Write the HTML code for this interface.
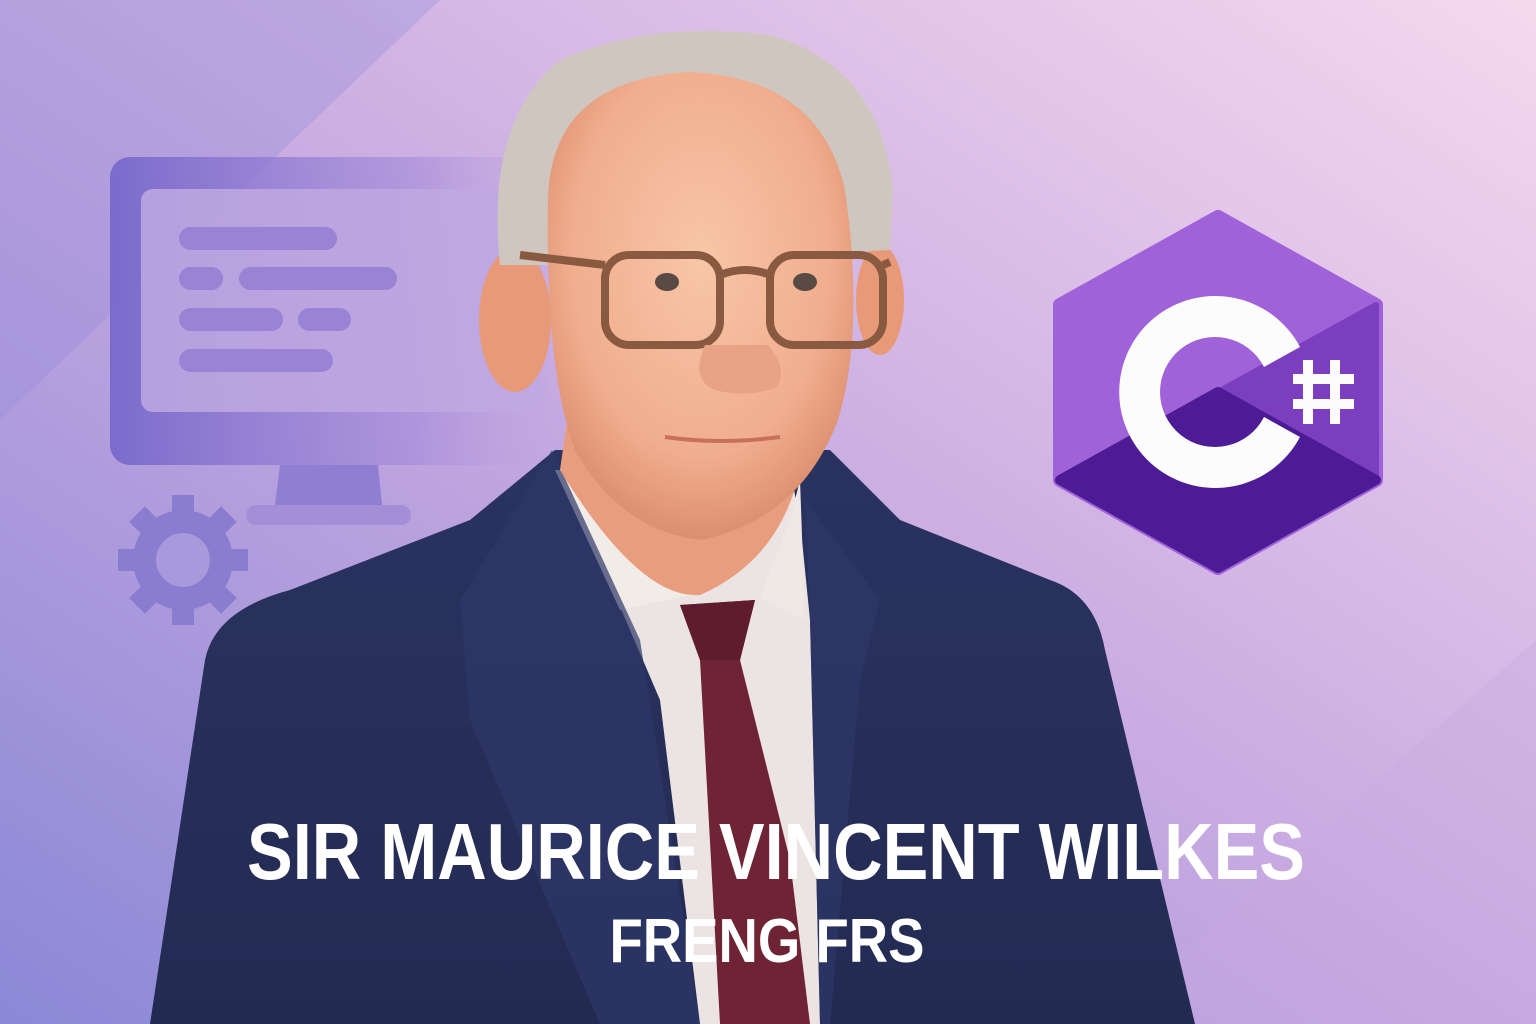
<!DOCTYPE html>
<html><head><meta charset="utf-8"><style>
html,body{margin:0;padding:0;width:1536px;height:1024px;overflow:hidden}
svg{display:block}
</style></head><body>
<svg width="1536" height="1024" viewBox="0 0 1536 1024" xmlns="http://www.w3.org/2000/svg">
<defs>
<linearGradient id="bg" x1="0" y1="1" x2="1" y2="0">
<stop offset="0" stop-color="#8a88d6"/>
<stop offset="0.45" stop-color="#c2a6e0"/>
<stop offset="1" stop-color="#f6d8ee"/>
</linearGradient>
<linearGradient id="mon" x1="0" y1="0" x2="1" y2="0">
<stop offset="0" stop-color="#7a6ccc"/>
<stop offset="0.7" stop-color="#a48ad8" stop-opacity="0.6"/>
<stop offset="1" stop-color="#c0a8e0" stop-opacity="0.2"/>
</linearGradient>
<linearGradient id="suit" x1="0" y1="0" x2="0" y2="1">
<stop offset="0" stop-color="#2a3360"/>
<stop offset="1" stop-color="#232a52"/>
</linearGradient>
<radialGradient id="face" cx="0.5" cy="0.4" r="0.6">
<stop offset="0" stop-color="#f8c6a8"/>
<stop offset="0.7" stop-color="#f0ae8e"/>
<stop offset="1" stop-color="#dc8e70"/>
</radialGradient>
</defs>
<rect width="1536" height="1024" fill="url(#bg)"/>
<polygon points="0,0 440,0 0,420" fill="#9088d6" opacity="0.3"/>
<polygon points="1100,1024 1536,640 1536,1024" fill="#c9a8df" opacity="0.35"/>

<!-- monitor -->
<rect x="110" y="157" width="440" height="308" rx="20" fill="url(#mon)"/>
<rect x="141" y="189" width="400" height="223" rx="12" fill="#bfa8e2" opacity="0.85"/>
<g fill="#9a82d4">
<rect x="179" y="227" width="158" height="23" rx="11.5"/>
<rect x="179" y="267" width="44" height="23" rx="11.5"/>
<rect x="239" y="267" width="158" height="23" rx="11.5"/>
<rect x="179" y="308" width="104" height="23" rx="11.5"/>
<rect x="298" y="308" width="53" height="23" rx="11.5"/>
<rect x="179" y="349" width="154" height="23" rx="11.5"/>
</g>
<polygon points="280,465 378,465 382,505 275,505" fill="#8f7ed2"/>
<rect x="246" y="505" width="165" height="20" rx="10" fill="#a48ed8"/>
<!-- gear -->
<g transform="translate(183,560)" fill="#8a7ccf">
<circle r="50"/>
<g id="t"><rect x="-11" y="-65" width="22" height="24"/></g>
<use href="#t" transform="rotate(45)"/><use href="#t" transform="rotate(90)"/><use href="#t" transform="rotate(135)"/>
<use href="#t" transform="rotate(180)"/><use href="#t" transform="rotate(225)"/><use href="#t" transform="rotate(270)"/><use href="#t" transform="rotate(315)"/>
<circle r="27" fill="#a898dc"/>
</g>

<!-- C# logo -->
<g>
<polygon points="1218,217 1376,305 1376,480 1218,568 1060,480 1060,305" fill="#a062d8" stroke="#a062d8" stroke-width="14" stroke-linejoin="round"/>
<polygon points="1218,392 1376,305 1376,480" fill="#7b3ebf" stroke="#7b3ebf" stroke-width="6" stroke-linejoin="round"/>
<polygon points="1218,392 1376,480 1218,568 1060,480" fill="#4c1b95" stroke="#4c1b95" stroke-width="10" stroke-linejoin="round"/>
<path d="M1300,347 A96,96 0 1 0 1300,437 L1264,417 A55,55 0 1 1 1264,367 Z" fill="#fdfcfc"/>
<g fill="#fdfcfc">
<rect x="1303" y="360" width="10" height="64"/>
<rect x="1330" y="360" width="10" height="64"/>
<rect x="1293" y="374" width="61" height="10"/>
<rect x="1293" y="399" width="61" height="10"/>
</g>
</g>

<!-- person -->
<path d="M150,1024 L205,660 Q215,610 290,590 L470,520 L555,450 L830,450 L900,520 L1050,580 Q1095,595 1105,650 L1195,1024 Z" fill="url(#suit)"/>
<path d="M555,470 L600,560 L660,700 L700,1024 L820,1024 L810,620 L800,520 L790,470 Z" fill="#ece4e2"/>
<path d="M555,470 L620,610 L690,595 L640,520 Z" fill="#f2ece8"/>
<path d="M800,480 L805,620 L760,598 L790,520 Z" fill="#f0e8e4"/>
<path d="M680,605 L755,600 L740,660 L790,860 L810,1024 L720,1024 L700,660 Z" fill="#6e2434"/>
<path d="M680,605 L755,600 L740,660 L700,660 Z" fill="#5e1c2c"/>
<path d="M552,450 L460,600 L470,720 L600,1024 L700,1024 L640,640 Z" fill="#2e3868" opacity="0.7"/>
<path d="M805,500 L880,600 L860,680 L830,1024 L820,1024 L810,620 Z" fill="#2e3868" opacity="0.7"/>
<!-- neck -->
<path d="M570,400 L560,470 Q640,600 700,595 Q780,560 800,470 L790,400 Z" fill="#e89e7e"/>
<!-- ears -->
<ellipse cx="515" cy="320" rx="36" ry="72" fill="#e89a78"/>
<ellipse cx="880" cy="300" rx="24" ry="55" fill="#e89a78"/>
<!-- hair -->
<path d="M500,265 Q485,120 560,60 Q650,20 770,35 Q880,65 893,190 L890,250 L540,265 Z" fill="#cfc6c0"/>
<!-- face -->
<path d="M548,200 Q550,80 690,72 Q820,78 845,190 Q865,330 838,420 Q800,520 700,540 Q620,530 575,450 Q545,370 548,200 Z" fill="url(#face)"/>
<!-- glasses -->
<g fill="none" stroke="#8a5a40" stroke-width="8">
<rect x="605" y="255" width="115" height="90" rx="24"/>
<rect x="770" y="255" width="113" height="90" rx="24"/>
<path d="M720,275 Q745,265 770,275"/>
<path d="M605,265 L520,255"/>
<path d="M883,265 L890,262"/>
</g>
<ellipse cx="667" cy="282" rx="12" ry="9" fill="#5a4a44"/>
<ellipse cx="805" cy="282" rx="12" ry="9" fill="#5a4a44"/>
<path d="M705,345 Q690,380 715,390 Q745,398 775,388 Q790,372 768,345" fill="#e8a284"/>
<path d="M665,437 Q720,445 780,437" fill="none" stroke="#c8705a" stroke-width="4"/>

<!-- text -->
<g font-family="'Liberation Sans', sans-serif" fill="#ffffff" text-anchor="middle">
<text x="776" y="879" font-size="80" font-weight="bold" textLength="1058" lengthAdjust="spacingAndGlyphs">SIR MAURICE VINCENT WILKES</text>
<text x="767" y="962" font-size="62" font-weight="bold" textLength="315" lengthAdjust="spacingAndGlyphs">FRENG FRS</text>
</g>
</svg>
</body></html>
